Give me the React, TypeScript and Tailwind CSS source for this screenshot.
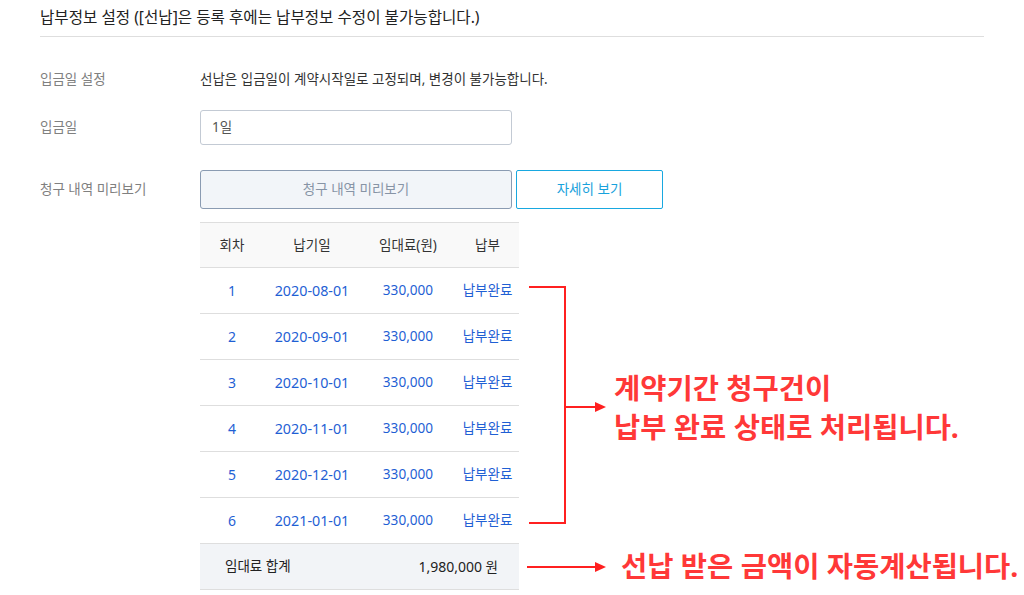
import React from 'react';

type Bill = {
  no: number;
  date: string;
  amount: string;
  status: string;
};

const bills: Bill[] = [
  { no: 1, date: '2020-08-01', amount: '330,000', status: '납부완료' },
  { no: 2, date: '2020-09-01', amount: '330,000', status: '납부완료' },
  { no: 3, date: '2020-10-01', amount: '330,000', status: '납부완료' },
  { no: 4, date: '2020-11-01', amount: '330,000', status: '납부완료' },
  { no: 5, date: '2020-12-01', amount: '330,000', status: '납부완료' },
  { no: 6, date: '2021-01-01', amount: '330,000', status: '납부완료' },
];

const font = { fontFamily: '"Noto Sans", "Noto Sans CJK KR", sans-serif' };

const App: React.FC = () => {
  return (
    <div
      className="relative h-[595px] w-[1024px] overflow-hidden bg-white text-[#333]"
      style={font}
    >
      <div className="px-[40px]">
        {/* 타이틀 */}
        <div className="flex h-[37px] items-center border-b border-[#dedede] text-[15.6px] text-[#222]">
          납부정보 설정 ([선납]은 등록 후에는 납부정보 수정이 불가능합니다.)
        </div>

        <div className="mt-[28px] flex h-[28px] items-center text-[13.5px]">
          <span className="w-[160px] text-[#808080]">입금일 설정</span>
          <span className="text-[#333]">
            선납은 입금일이 계약시작일로 고정되며, 변경이 불가능합니다.
          </span>
        </div>

        <div className="mt-[17px] flex items-center text-[13.5px]">
          <span className="w-[160px] text-[#808080]">입금일</span>
          <div className="flex h-[35px] w-[312px] items-center rounded-[3px] border border-[#c3cad4] px-[11px] text-[#555]">
            1일
          </div>
        </div>

        <div className="mt-[25px] flex items-center text-[13.5px]">
          <span className="w-[160px] text-[#808080]">청구 내역 미리보기</span>
          <div className="flex gap-[4px]">
            <button className="flex h-[39px] w-[312px] items-center justify-center rounded-[3px] border border-[#8a9bb2] bg-[#f2f5f9] text-[#8794a6]">
              청구 내역 미리보기
            </button>
            <button className="flex h-[39px] w-[147px] items-center justify-center rounded-[2px] border border-[#18a8e0] bg-white text-[#18a2dc]">
              자세히 보기
            </button>
          </div>
        </div>

        {/* 청구 내역 테이블 */}
        <div className="ml-[160px] mt-[13px] w-[319px]">
          <div className="flex h-[46px] items-center border-y border-[#dedede] bg-[#f9f9f9] text-[13.5px] text-[#333]">
            <div className="w-[64px] text-center">회차</div>
            <div className="w-[96px] text-center">납기일</div>
            <div className="w-[96px] text-center">임대료(원)</div>
            <div className="w-[63px] text-center">납부</div>
          </div>
          {bills.map((b) => (
            <div
              key={b.no}
              className="flex h-[46px] items-center border-b border-[#dedede] text-[#1f5fd4]"
            >
              <div className="w-[64px] text-center text-[14px]">{b.no}</div>
              <div className="w-[96px] text-center text-[14.3px]">{b.date}</div>
              <div className="w-[96px] text-center text-[13.6px]">{b.amount}</div>
              <div className="w-[63px] text-center text-[13.5px]">{b.status}</div>
            </div>
          ))}
          <div className="flex h-[46px] items-center justify-between border-b border-[#dedede] bg-[#f2f4f7] pl-[25px] pr-[21px] text-[#222]">
            <span className="text-[13.5px]">임대료 합계</span>
            <span className="text-[14px]">
              1,980,000 <span className="text-[13.5px]">원</span>
            </span>
          </div>
        </div>
      </div>

      {/* 주석 */}
      <svg
        className="pointer-events-none absolute left-0 top-0"
        width="1024"
        height="595"
        viewBox="0 0 1024 595"
      >
        <path
          d="M529 287 H565 V523 H529"
          fill="none"
          stroke="#ff2020"
          strokeWidth="2"
        />
        <path d="M565 407 H597" stroke="#ff2020" strokeWidth="2" />
        <polygon points="595,402 606,407 595,412" fill="#ff2020" />
        <path d="M527 567 H597" stroke="#ff2020" strokeWidth="2" />
        <polygon points="595,562 606,567 595,572" fill="#ff2020" />
      </svg>

      <div className="absolute left-[614px] top-[369px] text-[28.5px] font-bold leading-[39px] text-[#ff3838]">
        계약기간 청구건이
        <br />
        납부 완료 상태로 처리됩니다.
      </div>
      <div className="absolute left-[621px] top-[547px] text-[28.5px] font-bold leading-[39px] text-[#ff3838]">
        선납 받은 금액이 자동계산됩니다.
      </div>
    </div>
  );
};

export default App;
